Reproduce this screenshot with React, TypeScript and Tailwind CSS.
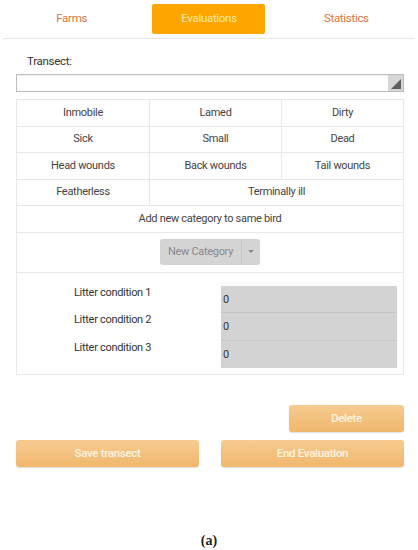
import React from "react";

const cells: { label: string; span?: string }[] = [
  { label: "Inmobile" },
  { label: "Lamed" },
  { label: "Dirty" },
  { label: "Sick" },
  { label: "Small" },
  { label: "Dead" },
  { label: "Head wounds" },
  { label: "Back wounds" },
  { label: "Tail wounds" },
  { label: "Featherless" },
  { label: "Terminally ill", span: "col-span-2" },
];

const litter = ["Litter condition 1", "Litter condition 2", "Litter condition 3"];

const btn =
  "h-[27px] rounded-[3px] bg-gradient-to-b from-[#f6cb90] to-[#f0b76c] flex items-center justify-center text-[11.5px] font-medium text-[#fff4e2] shadow-[0_1px_1px_rgba(0,0,0,0.12)]";

export default function App() {
  return (
    <div className="w-[418px] h-[550px] bg-white font-['Roboto',sans-serif] text-[#444] tracking-[-0.3px] overflow-hidden">
      {/* tabs */}
      <div className="mx-[3px] h-[39px] grid grid-cols-3 border-b border-[#e6e6e6] pt-[4px]">
        <div className="flex justify-center items-center h-[30px] text-[11.5px] text-[#d9733a]">Farms</div>
        <div className="flex justify-center">
          <div className="w-[113px] h-[30px] rounded-[2px] bg-[#ffa500] flex items-center justify-center text-[11.5px] text-[#fde9a8]">
            Evaluations
          </div>
        </div>
        <div className="flex justify-center items-center h-[30px] text-[11.5px] text-[#d9733a]">Statistics</div>
      </div>

      <div className="ml-[16px] w-[388px]">
        <div className="pl-[11px] pt-[14px] h-[35px] text-[11.5px] text-[#333]">Transect:</div>

        {/* select */}
        <div className="h-[18px] border border-[#bdbdbd] flex justify-end shadow-[inset_0_1px_1px_rgba(0,0,0,0.06)]">
          <div className="w-[15px] h-full bg-[#d6d6d6] flex items-end justify-end p-[2px]">
            <svg width="10" height="10" viewBox="0 0 10 10">
              <polygon points="10,0 10,10 0,10" fill="#5f5f5f" />
            </svg>
          </div>
        </div>

        {/* categories */}
        <div className="mt-[7px] border border-[#e8e8e8]">
          <div className="grid grid-cols-[133px_132px_1fr] text-[11px]">
            {cells.map((c, i) => (
              <div
                key={c.label}
                className={`h-[26.6px] flex items-center justify-center border-b border-[#e8e8e8] ${
                  i % 3 !== 2 && c.span === undefined ? "border-r" : ""
                } ${c.span ?? ""}`}
              >
                {c.label}
              </div>
            ))}
            <div className="col-span-3 h-[26.6px] flex items-center justify-center border-b border-[#e8e8e8]">
              Add new category to same bird
            </div>
          </div>

          <div className="h-[40px] flex items-center justify-center border-b border-[#e8e8e8]">
            <div className="flex h-[26px] w-[100px] rounded-[3px] bg-[#d4d4d4] text-[11px] text-[#8a8a8a]">
              <div className="w-[82px] flex items-center justify-center border-r border-[#c6c6c6]">New Category</div>
              <div className="flex-1 flex items-center justify-center">
                <svg width="6" height="4" viewBox="0 0 6 4">
                  <polygon points="0,0 6,0 3,3" fill="#888" />
                </svg>
              </div>
            </div>
          </div>

          <div className="flex pt-[13px] pb-[6px] pr-[6px]">
            <div className="w-[204px] pl-[57px] flex flex-col text-[11px] text-[#333]">
              {litter.map((l) => (
                <div key={l} className="h-[27.3px] leading-[14px]">
                  {l}
                </div>
              ))}
            </div>
            <div className="flex-1 flex flex-col bg-[#d3d3d3]">
              {litter.map((l, i) => (
                <div
                  key={l}
                  className={`h-[27.3px] flex items-end pb-[4px] pl-[2px] text-[11px] text-[#333] ${
                    i < 2 ? "border-b border-[#c4c4c4]" : ""
                  }`}
                >
                  0
                </div>
              ))}
            </div>
          </div>
        </div>

        {/* actions */}
        <div className="mt-[30px] flex justify-end">
          <div className={`w-[115px] ${btn}`}>Delete</div>
        </div>
        <div className="mt-[8px] flex justify-between">
          <div className={`w-[183px] ${btn}`}>Save transect</div>
          <div className={`w-[183px] ${btn}`}>End Evaluation</div>
        </div>
      </div>

      <div className="mt-[63px] text-center font-['Liberation_Serif',serif] font-bold text-[14px] tracking-normal text-[#222]">(a)</div>
    </div>
  );
}
